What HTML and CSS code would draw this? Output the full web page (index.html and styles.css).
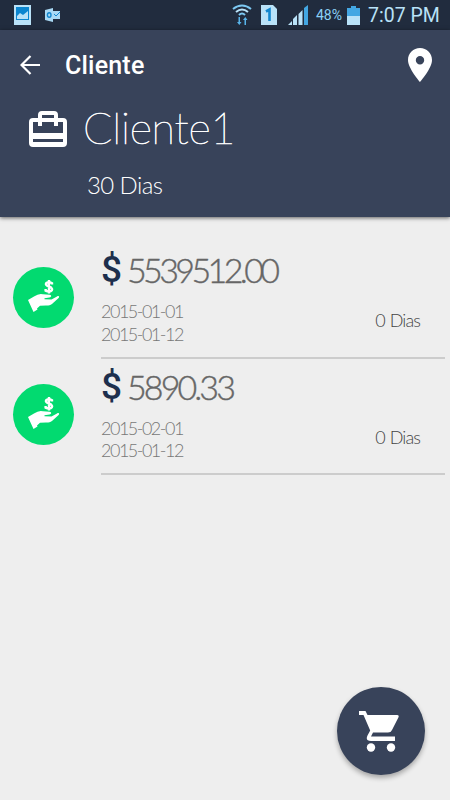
FILE: index.html
```
<!DOCTYPE html>
<html lang="es">
<head>
<meta charset="UTF-8">
<title>Cliente</title>
<link rel="stylesheet" href="styles.css">
</head>
<body>
<div class="statusbar">
	<svg class="st-picture" width="17" height="20" viewBox="0 0 17 20"><path fill="#b9e2f8" d="M0 0h17v20H0z"/><path fill="#0b86d0" d="M2 2h13v13H2z"/><path fill="#b9e2f8" d="M3 14v-3l3-3 3 2 5-4v8z"/></svg>
	<svg class="st-mail" width="15" height="14" viewBox="0 0 15 14"><path fill="#a9d9f4" d="M0 2l8-2v14l-8-2zM8 3h7v8H8z"/><ellipse cx="4.2" cy="7" rx="1.8" ry="2.3" fill="none" stroke="#1287cf" stroke-width="1.4"/><path fill="none" stroke="#1287cf" d="M9 6l2 2 4-4"/></svg>
	<div class="status-right">
		<svg class="st-wifi" width="20" height="22" viewBox="0 0 20 22"><g fill="none" stroke="#7cc8f2" stroke-width="2"><path d="M1 5Q10-2 19 5"/><path d="M4 8q6-5 12 0" stroke="#b9e2f8"/><path d="M7 11q3-3 6 0"/></g><path fill="#58b4ea" d="M6.500 13H8v5h1.500l-2.200 3L5 18h1.500zM12.500 21H14v-5h1.500l-2.200-3-2.300 3h1.500z"/></svg>
		<svg class="st-sim" width="16" height="20" viewBox="0 0 16 20"><path fill="#b9e2f8" d="M0 0h12l4 4v16H0z"/><path fill="none" stroke="#1287cf" stroke-width="2.600" d="M5 6.500l3.500-2V16"/></svg>
		<svg class="st-signal" width="20" height="20" viewBox="0 0 20 20"><path fill="#b9e2f8" d="M0 20l4-4v4zM5 20v-6l4-4v10zM10.500 20V9l4-4v15z"/><path fill="#43a7e3" d="M16 20V3l4-3v20z"/></svg>
		<span class="battery-text">48%</span>
		<svg class="st-battery" width="13" height="19" viewBox="0 0 13 19"><path fill="#43a7e3" d="M4 0h5v2h4v8H0V2h4z"/><path fill="#b9e2f8" d="M0 10h13v9H0z"/></svg>
		<span class="clock">7:07 PM</span>
	</div>
</div>

<header class="header">
	<div class="toolbar">
		<svg class="back" width="20" height="20" viewBox="0 0 20 20"><path fill="none" stroke="#fff" stroke-width="2.200" d="M20 10H2M10.500 1L1.500 10l9 9"/></svg>
		<h1 class="title">Cliente</h1>
		<svg class="pin" width="24" height="34" viewBox="0 0 24 34"><path fill="#fff" fill-rule="evenodd" d="M12 0C5.300 0 0 5.300 0 12c0 8.500 12 22 12 22s12-13.500 12-22C24 5.300 18.700 0 12 0zm0 8a4.200 4.200 0 1 1 0 8.400A4.200 4.200 0 0 1 12 8z"/></svg>
	</div>
	<div class="client">
		<svg class="case" width="38" height="36" viewBox="0 0 38 36"><path fill="#fff" fill-rule="evenodd" d="M13 0h12q4 0 4 4v3h5q4 0 4 4v21q0 4-4 4H4q-4 0-4-4V11q0-4 4-4h5V4q0-4 4-4zm0 4v3h12V4zM4 11v11h30V11h-5v4h-4v-4H13v4H9v-4zm0 17v3h30v-3z"/></svg>
		<span class="client-name">Cliente1</span>
	</div>
	<div class="client-days">30 Dias</div>
</header>

<svg class="defs">
	<symbol id="hand" viewBox="0 0 32 32">
		<path d="M0 20l6-3.500q5-3.500 9-2.200l6.500.500c2.500.300 2 2.500 0 2.700l-5 .700v1l7 .200 5.500-3c2-1 2.800.300 1.600 1.500l-6.600 6c-2 1.600-4 1.700-6 1.600l-6 .200-3 2.800.500 1-4 2.500z"/>
		<path fill="none" stroke="#fff" stroke-width="2.400" d="M24 4.500V3.200q-3-1.900-5.200-.500c-1.800 1.500-.500 3.100 2.200 3.800 3.400.900 3.900 3.600 1.800 4.700q-2.300 1-5.200-.600V9M21 0v13.500"/>
	</symbol>
</svg>

<main class="list">
	<div class="row">
		<div class="avatar"><svg width="32" height="32"><use href="#hand"/></svg></div>
		<div class="detail">
			<div class="amount"><b>$</b><span class="amount-value long">5539512.00</span></div>
			<div class="dates">2015-01-01<br>2015-01-12</div>
			<div class="days">0 Dias</div>
		</div>
	</div>
	<div class="row">
		<div class="avatar"><svg width="32" height="32"><use href="#hand"/></svg></div>
		<div class="detail">
			<div class="amount"><b>$</b><span class="amount-value">5890.33</span></div>
			<div class="dates">2015-02-01<br>2015-01-12</div>
			<div class="days">0 Dias</div>
		</div>
	</div>
</main>

<div class="fab">
	<svg width="40" height="41" viewBox="0 0 40 41"><path fill="#fff" d="M0 0h6.500l2 4H38q2.300 0 1.500 2.200L33 19q-1 2.500-4 2.500H14l-2 4h24V30H12q-6 0-3.500-5.500l2.700-5L4.500 4H0z"/><circle cx="12" cy="36.500" r="4.200" fill="#fff"/><circle cx="32" cy="36.500" r="4.200" fill="#fff"/></svg>
</div>
</body>
</html>
```

FILE: styles.css
```
* {
	box-sizing: border-box;
}
body {
	margin: 0;
	height: 800px;
	background: #eee;
	font-family: Lato, "Open Sans", sans-serif;
	overflow: hidden;
}
svg {
	flex: none;
}
.statusbar {
	height: 30px;
	display: flex;
	align-items: center;
	padding: 0 11px 0 14px;
	background: #212c3e;
	font-family: Roboto, sans-serif;
	color: #b9e2f8;
}
.st-mail {
	margin-left: 14px;
}
.status-right {
	display: flex;
	align-items: center;
	margin-left: auto;
}
.st-sim {
	margin-left: 9px;
}
.st-signal {
	margin-left: 11px;
}
.battery-text {
	width: 28px;
	margin-left: 8px;
	font-size: 14px;
	color: #8bd0f5;
}
.st-battery {
	margin-left: 3px;
}
.clock {
	width: 71px;
	margin-left: 8px;
	font-size: 19.5px;
	white-space: nowrap;
}
.header {
	height: 187px;
	background: #38435a;
	color: #fff;
	box-shadow: 0 1px 4px rgba(0, 0, 0, .6);
}
.toolbar {
	height: 70px;
	display: flex;
	align-items: center;
	padding: 0 18px 0 20px;
}
.title {
	margin: 0 auto 0 25px;
	font: 500 25px Roboto, sans-serif;
	letter-spacing: .2px;
}
.client {
	height: 58px;
	display: flex;
	align-items: center;
	padding-left: 29px;
}
.client-name {
	margin: -4px 0 0 16px;
	font-size: 43px;
	font-weight: 100;
	letter-spacing: -.2px;
	-webkit-text-stroke: .7px #fff;
}
.client-days {
	padding-left: 87px;
	margin-top: 12px;
	font-size: 24px;
	font-weight: 300;
	line-height: 30px;
	letter-spacing: -.6px;
}
.defs {
	display: none;
}
.list {
	padding-top: 25px;
}
.row {
	display: flex;
	height: 116.5px;
	padding: 0 5px 0 13px;
}
.avatar {
	width: 61px;
	height: 61px;
	margin-top: 25px;
	padding: 13px 0 0 15px;
	border-radius: 50%;
	background: #02da70;
	fill: #fff;
}
.detail {
	flex: 1;
	display: grid;
	grid-template-columns: 1fr auto;
	grid-template-rows: 57px 1fr;
	margin-left: 27px;
	border-bottom: 2px solid #ccc;
	color: #777;
}
.amount {
	grid-column: 1 / 3;
	display: flex;
	align-items: center;
	line-height: 55px;
	padding-bottom: 2px;
	color: #666;
}
.amount b {
	width: 26px;
	font: 500 37px/55px Roboto, sans-serif;
	color: #1d2f4d;
}
.amount-value {
	font-size: 34px;
	font-weight: 300;
	letter-spacing: -2.9px;
	-webkit-text-stroke: .4px #666;
}
.amount-value.long {
	letter-spacing: -3.6px;
}
.dates {
	font-size: 18px;
	font-weight: 300;
	line-height: 22.5px;
	padding-top: 1px;
	letter-spacing: -1.5px;
}
.days {
	padding: 9px 25px 0 0;
	font-size: 18px;
	font-weight: 300;
	line-height: 24px;
	letter-spacing: -.9px;
	word-spacing: 1px;
	color: #444;
}
.fab {
	position: absolute;
	left: 337px;
	top: 687px;
	width: 88px;
	height: 88px;
	padding: 24px 0 0 22px;
	border-radius: 50%;
	background: #38435a;
	box-shadow: 0 3px 5px rgba(0, 0, 0, .3);
}
```
